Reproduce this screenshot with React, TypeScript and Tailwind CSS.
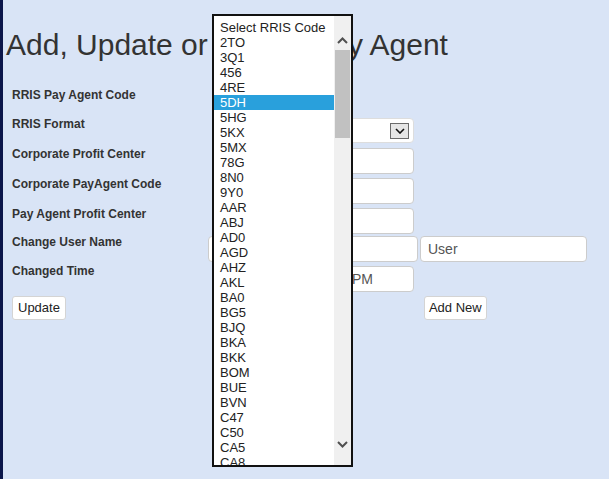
import React from "react";

const codes = [
  "Select RRIS Code", "2TO", "3Q1", "456", "4RE", "5DH", "5HG", "5KX", "5MX", "78G",
  "8N0", "9Y0", "AAR", "ABJ", "AD0", "AGD", "AHZ", "AKL", "BA0", "BG5",
  "BJQ", "BKA", "BKK", "BOM", "BUE", "BVN", "C47", "C50", "CA5", "CA8",
];

function Chevron({ up }: { up?: boolean }) {
  return (
    <svg width="11" height="7" viewBox="0 0 11 7" className="block">
      <path
        d={up ? "M1 6 L5.5 1.5 L10 6" : "M1 1 L5.5 5.5 L10 1"}
        fill="none"
        stroke="#505050"
        strokeWidth="2"
      />
    </svg>
  );
}

function Label({ text }: { text: string }) {
  return <div className="w-[196px] pl-[9px] text-[12px] leading-[15px] font-bold text-[#333]">{text}</div>;
}

const inputCls = "bg-white border border-[#ccc] rounded-[4px] h-[26px] text-[14px] text-[#555] px-[7px] flex items-center";

export default function App() {
  return (
    <div
      className="relative min-h-[479px] bg-[#d9e4f6] border-l-[3px] border-[#0b164a] overflow-hidden"
      style={{ fontFamily: '"Liberation Sans", Arial, sans-serif' }}
    >
      <h1 className="pt-[28px] pl-[3px] text-[30px] leading-[34px] text-[#333] font-normal">
        Add, Update or Delete Pay Agent
      </h1>

      <div className="mt-[26px] flex flex-col">
        {/* RRIS Pay Agent Code */}
        <div className="flex items-start h-[29px]">
          <Label text="RRIS Pay Agent Code" />
          <div className="ml-[13px] mt-[1px] w-[141px] h-[25px] bg-white border border-[#ccc] rounded-[4px]" />
        </div>
        {/* RRIS Format */}
        <div className="flex items-start h-[30px]">
          <Label text="RRIS Format" />
          <div className="ml-[14px] mt-[1px] w-[201px] h-[25px] bg-white border border-[#ddd] rounded-[4px] flex items-center justify-end pr-[4px]">
            <div className="w-[19px] h-[16px] bg-[#e6e6e6] border border-[#6b6b6b] flex items-center justify-center">
              <svg width="10" height="6" viewBox="0 0 10 6">
                <path d="M1 1 L5 5 L9 1" fill="none" stroke="#111" strokeWidth="1.6" />
              </svg>
            </div>
          </div>
        </div>
        <div className="flex items-start h-[30px]">
          <Label text="Corporate Profit Center" />
          <div className={`ml-[14px] mt-[1px] w-[201px] ${inputCls}`} />
        </div>
        <div className="flex items-start h-[30px]">
          <Label text="Corporate PayAgent Code" />
          <div className={`ml-[14px] mt-[1px] w-[201px] ${inputCls}`} />
        </div>
        <div className="flex items-start h-[28px]">
          <Label text="Pay Agent Profit Center" />
          <div className={`ml-[14px] mt-[1px] w-[201px] ${inputCls}`} />
        </div>
        <div className="flex items-start h-[29px]">
          <Label text="Change User Name" />
          <div className={`ml-[9px] mt-[1px] w-[210px] ${inputCls}`} />
          <div className={`ml-[2px] mt-[1px] w-[167px] ${inputCls}`}>User</div>
        </div>
        <div className="flex items-start h-[32px]">
          <Label text="Changed Time" />
          <div className={`ml-[14px] mt-[2px] w-[201px] ${inputCls}`}>
            <span className="ml-auto mr-[33px]">PM</span>
          </div>
        </div>
        <div className="flex items-start">
          <button className="ml-[9px] h-[24px] px-[5px] bg-white border border-[#d4d4d4] rounded-[3px] text-[13px] text-[#222]">
            Update
          </button>
          <button className="ml-[358px] h-[24px] px-[4px] bg-white border border-[#d4d4d4] rounded-[3px] text-[13px] text-[#222]">
            Add New
          </button>
        </div>
      </div>

      {/* open dropdown list */}
      <div className="absolute left-[209px] top-[14px] w-[141px] h-[453px] border-2 border-[#111] bg-white flex">
        <div className="flex-1 pt-[4px] overflow-hidden">
          {codes.map((c) => (
            <div
              key={c}
              className={`h-[15px] leading-[15px] text-[13px] pl-[6px] ${
                c === "5DH" ? "bg-[#29a0dc] text-white" : "text-[#222]"
              }`}
            >
              {c}
            </div>
          ))}
        </div>
        <div className="w-[17px] bg-[#f0f0f0] flex flex-col items-center">
          <div className="mt-[18px] h-[12px] flex items-center">
            <Chevron up />
          </div>
          <div className="mt-[4px] w-[15px] h-[88px] bg-[#c1c1c1]" />
          <div className="mt-auto mb-[17px]">
            <Chevron />
          </div>
        </div>
      </div>
    </div>
  );
}
